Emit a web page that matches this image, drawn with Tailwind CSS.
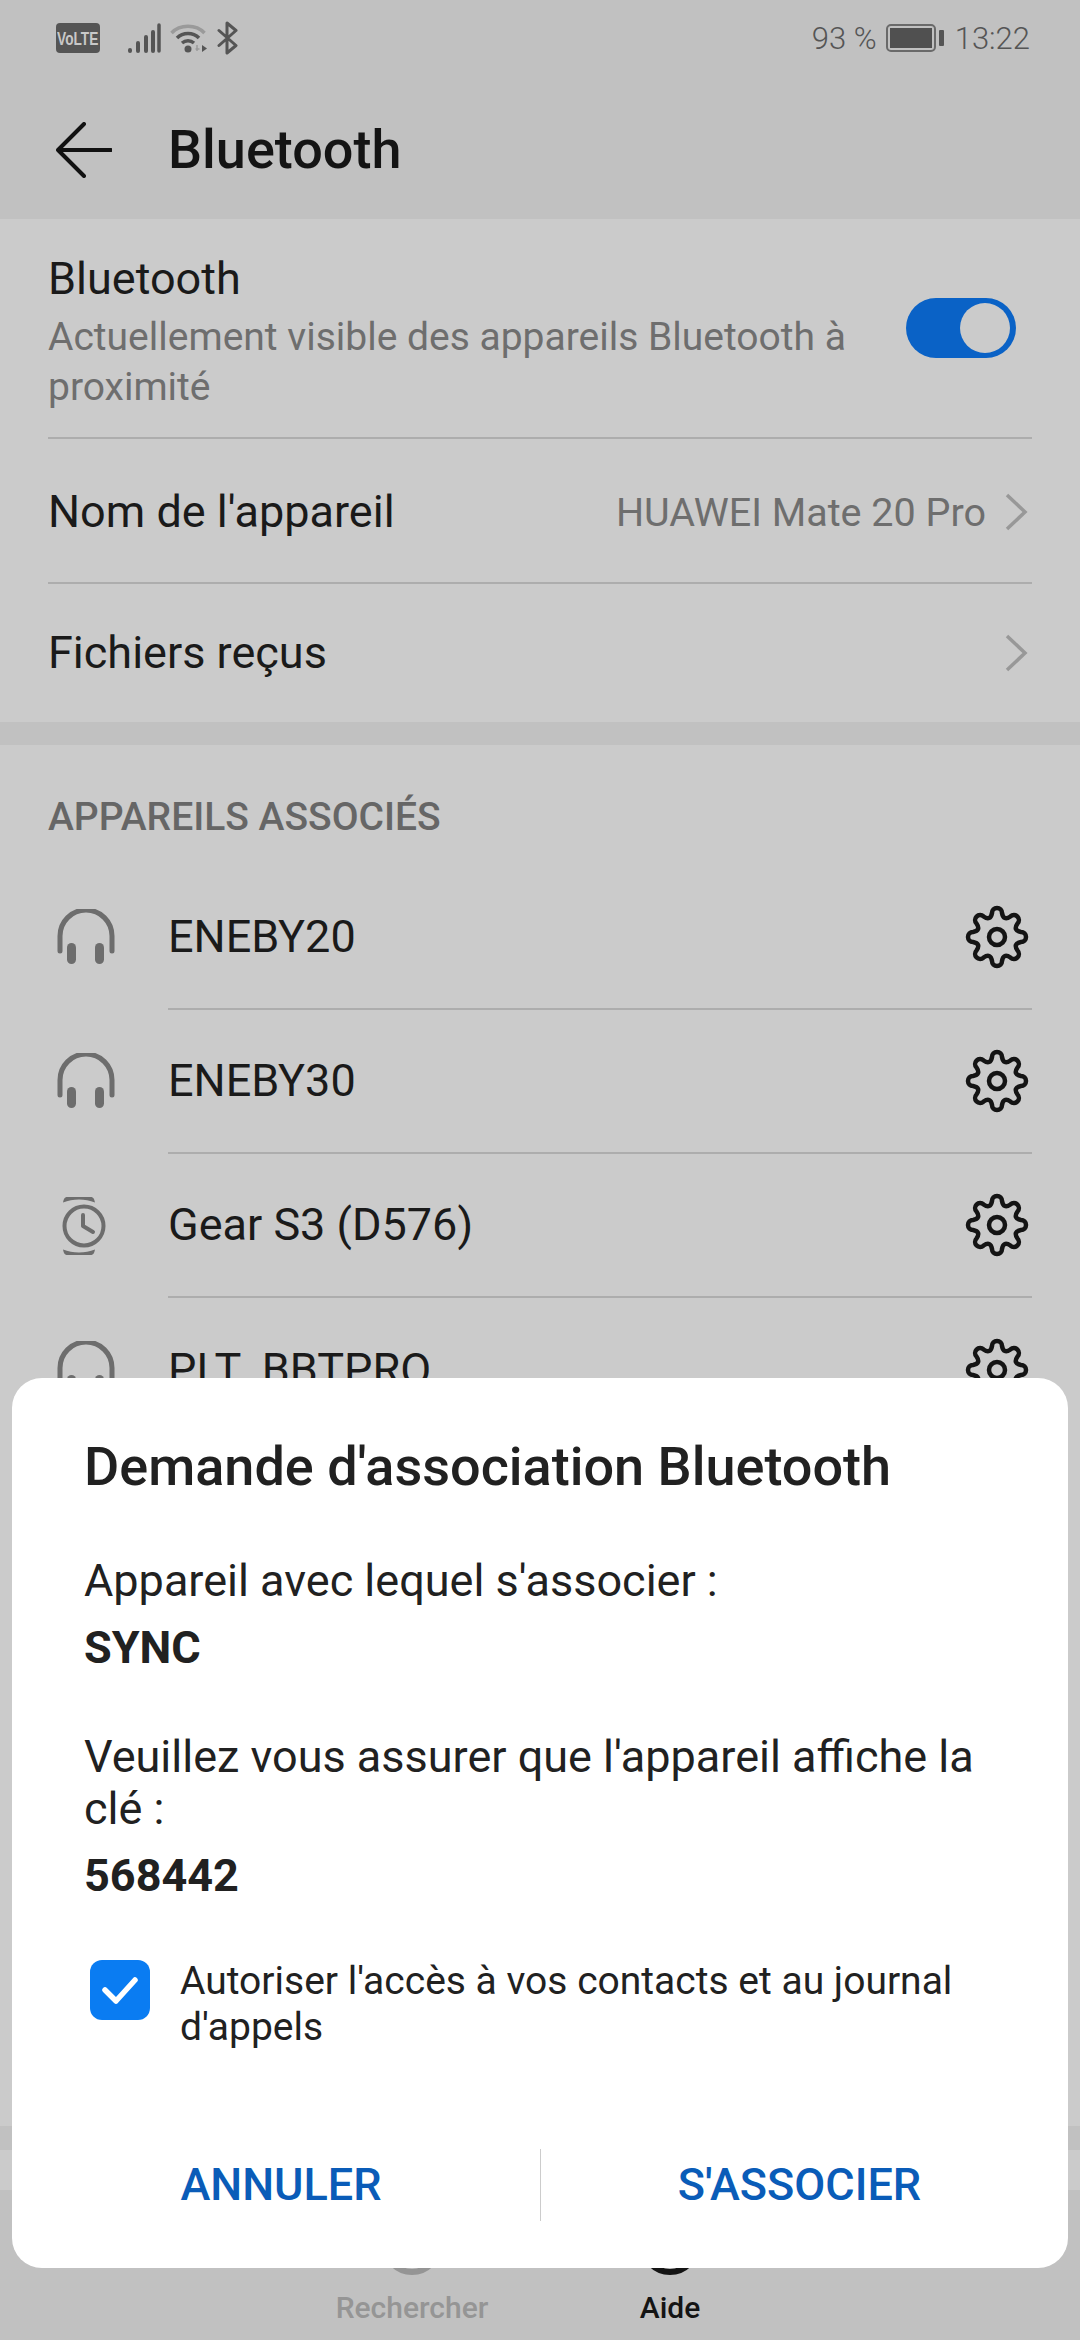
<!DOCTYPE html>
<html lang="fr">
<head>
<meta charset="utf-8">
<script src="https://cdn.jsdelivr.net/npm/@tailwindcss/browser@4"></script>
</head>
<body class="m-0">
<div class="relative w-[1080px] h-[2340px] overflow-hidden flex flex-col bg-[#c1c1c1] [font-family:Roboto,sans-serif] text-[#1a1a1a]">

  <!-- status bar -->
  <div class="h-[76px] shrink-0 flex items-center justify-between pl-[56px] pr-[50px] text-[30px] text-[#555]">
    <div class="flex items-center">
      <div class="w-[44px] h-[30px] rounded-[4px] bg-[#555] text-[#c8c8c8] text-[19px] font-bold flex items-center justify-center leading-none [font-family:'Liberation_Sans',sans-serif] overflow-hidden"><span class="scale-x-[0.72]">VoLTE</span></div>
      <svg class="ml-[27px]" width="34" height="32" viewBox="0 0 34 32"><g stroke="#555" stroke-width="4" stroke-linecap="round"><path d="M3 29v-1"/><path d="M11 29v-8"/><path d="M19 29v-14"/><path d="M26 29v-19"/><path d="M32 29v-26" stroke-width="3.5"/></g></svg>
      <svg class="ml-[9px]" width="38" height="32" viewBox="0 0 38 32" fill="none"><path d="M1.500 11C10 2 26 2 34.500 11" stroke="#9a9a9a" stroke-width="3.500"/><path d="M7 16C13 10 23 10 29 16" stroke="#555" stroke-width="3.500"/><path d="M12 21C15.500 18 20.500 18 24 21" stroke="#555" stroke-width="3.500"/><circle cx="18" cy="27" r="3.500" fill="#555"/><path d="M27 23v6M25.500 27h4" stroke="#9a9a9a" stroke-width="1.500"/><path d="M32 23l5 3.500-5 3.500z" fill="#555"/></svg>
      <svg class="ml-[9px]" width="22" height="34" viewBox="0 0 22 34" fill="none"><path d="M2 9.500L19 24.500L10 32V2L19 9.500L2 24.500" stroke="#555" stroke-width="3" stroke-linejoin="round" stroke-linecap="round"/></svg>
    </div>
    <div class="flex items-center leading-none font-light text-[31px]">
      <span>93 %</span>
      <div class="ml-[9px] w-[50px] h-[28px] rounded-[5px] border-2 border-[#6a6a6a] p-[2px]"><div class="w-full h-full bg-[#505050]"></div></div>
      <div class="ml-[3px] w-[5px] h-[16px] bg-[#555] rounded-[1px]"></div>
      <span class="ml-[11px]">13:22</span>
    </div>
  </div>

  <!-- header -->
  <div class="h-[143px] shrink-0 flex items-center pl-[56px] pt-[4px]">
    <svg width="56" height="56" viewBox="0 0 56 56" fill="none"><path d="M28 2L2 28L28 54M2 28H55" stroke="#111" stroke-width="4" stroke-linecap="round" stroke-linejoin="round"/></svg>
    <h1 class="ml-[56px] text-[54px] leading-none font-medium text-[#141414]">Bluetooth</h1>
  </div>

  <!-- settings card -->
  <div class="shrink-0 h-[503px] bg-[#cbcbcb] px-[48px] flex flex-col">
    <div class="h-[220px] border-b-2 border-[#adadad] flex items-center justify-between">
      <div class="w-[860px]">
        <div class="text-[45px] leading-[60px] mt-[5px]">Bluetooth</div>
        <div class="text-[39px] leading-[50px] mt-[3px] text-[#6e6e6e]">Actuellement visible des appareils Bluetooth à proximité</div>
      </div>
      <div class="mr-[16px] w-[110px] h-[60px] rounded-full bg-[#0a62c6] flex items-center justify-end pr-[6px]"><div class="w-[50px] h-[50px] rounded-full bg-[#cbcbcb]"></div></div>
    </div>
    <div class="h-[145px] border-b-2 border-[#adadad] flex items-center justify-between">
      <span class="text-[45px] mt-[2px]">Nom de l'appareil</span>
      <div class="flex items-center text-[39.5px] text-[#6e6e6e]">
        <span class="mt-[4px]">HUAWEI Mate 20 Pro</span>
        <svg class="ml-[18px] mr-[4px] mt-[2px]" width="24" height="40" viewBox="0 0 24 40" fill="none"><path d="M3 3L21 20L3 37" stroke="#989898" stroke-width="3.500"/></svg>
      </div>
    </div>
    <div class="flex-1 flex items-center justify-between">
      <span class="text-[45px]">Fichiers reçus</span>
      <svg class="mr-[4px]" width="24" height="40" viewBox="0 0 24 40" fill="none"><path d="M3 3L21 20L3 37" stroke="#989898" stroke-width="3.500"/></svg>
    </div>
  </div>

  <!-- paired devices -->
  <div class="mt-[23px] shrink-0 h-[1381px] bg-[#cbcbcb] pl-[48px] pr-[48px]">
    <div class="h-[121px] pt-[46px] text-[39px] leading-[52px] font-medium text-[#666]">APPAREILS ASSOCIÉS</div>

    <div class="flex h-[144px] items-stretch">
      <svg class="w-[120px] shrink-0 self-center mt-[2px]" height="60" viewBox="0 0 120 60" fill="none"><path d="M12 42V27a26 26 0 0 1 52 0V42" stroke="#6d6d6d" stroke-width="5" stroke-linecap="round"/><rect x="19" y="34" width="9" height="21" rx="4.500" fill="#6d6d6d"/><rect x="47" y="34" width="9" height="21" rx="4.500" fill="#6d6d6d"/></svg>
      <div class="flex-1 border-b-2 border-[#adadad] flex items-center justify-between pr-[3px]">
        <span class="text-[45px]">ENEBY20</span>
        <svg width="64" height="64" viewBox="-32 -32 64 64" fill="none" stroke="#141414" stroke-width="4.500"><path d="M-5,-24A5 5 0 0 1 5,-24Q6.500,-15.700 13.440,-20.510A5 5 0 0 1 20.510,-13.440Q15.700,-6.500 24,-5A5 5 0 0 1 24,5Q15.700,6.500 20.510,13.440A5 5 0 0 1 13.440,20.510Q6.500,15.700 5,24A5 5 0 0 1 -5,24Q-6.500,15.700 -13.440,20.510A5 5 0 0 1 -20.510,13.440Q-15.700,6.500 -24,5A5 5 0 0 1 -24,-5Q-15.700,-6.500 -20.510,-13.440A5 5 0 0 1 -13.440,-20.510Q-6.500,-15.700 -5,-24Z"/><circle r="8"/></svg>
      </div>
    </div>

    <div class="flex h-[144px] items-stretch">
      <svg class="w-[120px] shrink-0 self-center mt-[2px]" height="60" viewBox="0 0 120 60" fill="none"><path d="M12 42V27a26 26 0 0 1 52 0V42" stroke="#6d6d6d" stroke-width="5" stroke-linecap="round"/><rect x="19" y="34" width="9" height="21" rx="4.500" fill="#6d6d6d"/><rect x="47" y="34" width="9" height="21" rx="4.500" fill="#6d6d6d"/></svg>
      <div class="flex-1 border-b-2 border-[#adadad] flex items-center justify-between pr-[3px]">
        <span class="text-[45px]">ENEBY30</span>
        <svg width="64" height="64" viewBox="-32 -32 64 64" fill="none" stroke="#141414" stroke-width="4.500"><path d="M-5,-24A5 5 0 0 1 5,-24Q6.500,-15.700 13.440,-20.510A5 5 0 0 1 20.510,-13.440Q15.700,-6.500 24,-5A5 5 0 0 1 24,5Q15.700,6.500 20.510,13.440A5 5 0 0 1 13.440,20.510Q6.500,15.700 5,24A5 5 0 0 1 -5,24Q-6.500,15.700 -13.440,20.510A5 5 0 0 1 -20.510,13.440Q-15.700,6.500 -24,5A5 5 0 0 1 -24,-5Q-15.700,-6.500 -20.510,-13.440A5 5 0 0 1 -13.440,-20.510Q-6.500,-15.700 -5,-24Z"/><circle r="8"/></svg>
      </div>
    </div>

    <div class="flex h-[144px] items-stretch">
      <svg class="w-[120px] shrink-0 self-center" height="62" viewBox="0 0 120 62" fill="none"><path d="M16 7.500C17 2 19 2 21 2H43C45 2 47 2 48 7.500C38 3.500 26 3.500 16 7.500Z" fill="#6d6d6d" transform="translate(-1 0)"/><circle cx="36" cy="31" r="19.500" stroke="#6d6d6d" stroke-width="4"/><path d="M35 20V31L45 37" stroke="#6d6d6d" stroke-width="4" stroke-linecap="round" stroke-linejoin="round"/><path d="M16 54.500C17 60 19 60 21 60H43C45 60 47 60 48 54.500C38 58.500 26 58.500 16 54.500Z" fill="#6d6d6d" transform="translate(-1 0)"/></svg>
      <div class="flex-1 border-b-2 border-[#adadad] flex items-center justify-between pr-[3px]">
        <span class="text-[45px]">Gear S3 (D576)</span>
        <svg width="64" height="64" viewBox="-32 -32 64 64" fill="none" stroke="#141414" stroke-width="4.500"><path d="M-5,-24A5 5 0 0 1 5,-24Q6.500,-15.700 13.440,-20.510A5 5 0 0 1 20.510,-13.440Q15.700,-6.500 24,-5A5 5 0 0 1 24,5Q15.700,6.500 20.510,13.440A5 5 0 0 1 13.440,20.510Q6.500,15.700 5,24A5 5 0 0 1 -5,24Q-6.500,15.700 -13.440,20.510A5 5 0 0 1 -20.510,13.440Q-15.700,6.500 -24,5A5 5 0 0 1 -24,-5Q-15.700,-6.500 -20.510,-13.440A5 5 0 0 1 -13.440,-20.510Q-6.500,-15.700 -5,-24Z"/><circle r="8"/></svg>
      </div>
    </div>

    <div class="flex h-[144px] items-stretch">
      <svg class="w-[120px] shrink-0 self-center mt-[2px]" height="60" viewBox="0 0 120 60" fill="none"><path d="M12 42V27a26 26 0 0 1 52 0V42" stroke="#6d6d6d" stroke-width="5" stroke-linecap="round"/><rect x="19" y="34" width="9" height="21" rx="4.500" fill="#6d6d6d"/><rect x="47" y="34" width="9" height="21" rx="4.500" fill="#6d6d6d"/></svg>
      <div class="flex-1 flex items-center justify-between pr-[3px]">
        <span class="text-[45px]">PLT_BBTPRO</span>
        <svg width="64" height="64" viewBox="-32 -32 64 64" fill="none" stroke="#141414" stroke-width="4.500"><path d="M-5,-24A5 5 0 0 1 5,-24Q6.500,-15.700 13.440,-20.510A5 5 0 0 1 20.510,-13.440Q15.700,-6.500 24,-5A5 5 0 0 1 24,5Q15.700,6.500 20.510,13.440A5 5 0 0 1 13.440,20.510Q6.500,15.700 5,24A5 5 0 0 1 -5,24Q-6.500,15.700 -13.440,20.510A5 5 0 0 1 -20.510,13.440Q-15.700,6.500 -24,5A5 5 0 0 1 -24,-5Q-15.700,-6.500 -20.510,-13.440A5 5 0 0 1 -13.440,-20.510Q-6.500,-15.700 -5,-24Z"/><circle r="8"/></svg>
      </div>
    </div>
  </div>

  <div class="mt-[24px] shrink-0 h-[40px] bg-[#cbcbcb]"></div>

  <!-- bottom nav -->
  <div class="relative flex-1 flex justify-center text-[30px] font-medium leading-none">
    <div class="absolute left-[332px] top-[25px] w-[160px] flex flex-col items-center text-[#959595]">
      <div class="w-[60px] h-[60px] rounded-full border-[6px] border-[#959595]"></div>
      <span class="mt-[18px]">Rechercher</span>
    </div>
    <div class="absolute left-[590px] top-[25px] w-[160px] flex flex-col items-center text-[#141414]">
      <div class="w-[60px] h-[60px] rounded-full border-[6px] border-[#141414]"></div>
      <span class="mt-[18px]">Aide</span>
    </div>
  </div>

  <!-- dialog -->
  <div class="absolute left-[12px] top-[1378px] w-[1056px] h-[890px] rounded-[30px] bg-white flex flex-col text-[#212121]">
    <div class="pl-[72px] pr-[72px] pt-[60px]">
      <h2 class="text-[54px] leading-[58px] font-medium">Demande d'association Bluetooth</h2>
      <p class="mt-[57px] text-[45px] leading-[56px]">Appareil avec lequel s'associer :</p>
      <p class="mt-[11px] text-[45px] leading-[56px] font-bold">SYNC</p>
      <p class="mt-[55px] text-[45px] leading-[52px]">Veuillez vous assurer que l'appareil affiche la clé :</p>
      <p class="mt-[13px] text-[45px] leading-[56px] font-bold">568442</p>
    </div>
    <div class="flex items-start mt-[52px] pl-[78px] pr-[72px]">
      <div class="w-[60px] h-[60px] shrink-0 rounded-[12px] bg-[#0a7cf2] mt-[4px] flex items-center justify-center">
        <svg width="38" height="30" viewBox="0 0 38 30" fill="none"><path d="M4 15L15 26L34 5" stroke="#fff" stroke-width="5.500" stroke-linecap="round" stroke-linejoin="round"/></svg>
      </div>
      <p class="ml-[30px] text-[39px] leading-[46px] pt-[2px]">Autoriser l'accès à vos contacts et au journal d'appels</p>
    </div>
    <div class="absolute bottom-[47px] left-0 right-0 h-[72px] flex items-center text-[45px] font-medium text-[#0a5cb8]">
      <div class="w-[528px] text-center pl-[10px]">ANNULER</div>
      <div class="w-[1px] h-[72px] bg-[#cccccc]"></div>
      <div class="flex-1 text-center pr-[10px]">S'ASSOCIER</div>
    </div>
  </div>
</div>
</body>
</html>
